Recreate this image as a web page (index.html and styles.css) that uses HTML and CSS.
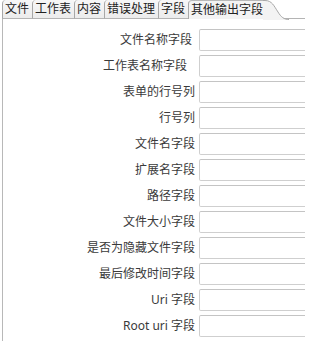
FILE: index.html
```html
<!DOCTYPE html>
<html lang="zh-CN">
<head>
<meta charset="utf-8">
<title>其他输出字段</title>
<link rel="stylesheet" href="styles.css">
</head>
<body>
<div class="tabs">
  <div class="tab">文件</div>
  <div class="tab">工作表</div>
  <div class="tab">内容</div>
  <div class="tab">错误处理</div>
  <div class="tab">字段</div>
  <div class="tab tab-active"><span class="tab-label">其他输出字段</span><svg class="tab-curve" width="26" height="20" viewBox="0 0 26 20"><path d="M0 0.5 H2 C9 0.5 11 6 15 12 C18 17 21 19.5 26 19.5 V20 H0 Z" fill="#f3f3f3"/><path d="M0 0.5 H2 C9 0.5 11 6 15 12 C18 17 21 19.5 26 19.5" fill="none" stroke="#a8a8a8" stroke-width="1"/></svg></div>
  <div class="tab-rest"></div>
</div>
<div class="panel">
  <div class="form">
    <label class="label label-pad1">文件名称字段</label><div class="field"></div>
    <label class="label label-pad2">工作表名称字段</label><div class="field"></div>
    <label class="label">表单的行号列</label><div class="field"></div>
    <label class="label">行号列</label><div class="field"></div>
    <label class="label">文件名字段</label><div class="field"></div>
    <label class="label">扩展名字段</label><div class="field"></div>
    <label class="label">路径字段</label><div class="field"></div>
    <label class="label">文件大小字段</label><div class="field"></div>
    <label class="label">是否为隐藏文件字段</label><div class="field"></div>
    <label class="label">最后修改时间字段</label><div class="field"></div>
    <label class="label">Uri 字段</label><div class="field"></div>
    <label class="label">Root uri 字段</label><div class="field"></div>
  </div>
</div>
</body>
</html>
```

FILE: styles.css
```css
html, body {
  margin: 0;
  padding: 0;
  background: #ffffff;
  overflow: hidden;
}

body {
  width: 305px;
  height: 341px;
  font-family: "Noto Sans", "Noto Sans CJK SC", sans-serif;
  font-size: 12px;
  color: #333333;
}

.tabs {
  display: flex;
  align-items: stretch;
  height: 19px;
  padding-left: 2px;
  background: #ffffff;
}

.tab {
  display: flex;
  align-items: center;
  padding: 0 3px 0 2px;
  border-left: 1px solid #a8a8a8;
  border-top-left-radius: 4px;
  background: linear-gradient(#f7f7f7, #ececec);
  border-bottom: 1px solid #b4b4b4;
  color: #222222;
  line-height: 18px;
  white-space: nowrap;
}

.tab-active {
  padding-right: 0;
  background: #f3f3f3;
  border-top: 1px solid #b8b8b8;
  border-bottom: none;
  height: 19px;
  box-sizing: border-box;
  position: relative;
}

.tab-label {
  padding-right: 0;
}

.tab-curve {
  display: block;
  align-self: flex-start;
  margin-top: -1px;
  margin-right: -26px;
  flex: none;
}

.tab-rest {
  flex: 1;
  border-bottom: 1px solid #b4b4b4;
}

.panel {
  margin-left: 2px;
  border-left: 1px solid #b8b8b8;
  padding-top: 10px;
  height: 331px;
  box-sizing: border-box;
}

.form {
  display: grid;
  grid-template-columns: 192px 120px;
  column-gap: 4px;
  row-gap: 4px;
  align-items: center;
}

.label {
  text-align: right;
  color: #3a3a3a;
  line-height: 16px;
  white-space: nowrap;
}

.label-pad1 {
  padding-right: 3px;
}

.label-pad2 {
  padding-right: 8px;
}

.field {
  height: 22px;
  box-sizing: border-box;
  border: 1px solid #cfcfcf;
  border-top-color: #c4c4c4;
  border-radius: 2px;
  background: #ffffff;
}
```
